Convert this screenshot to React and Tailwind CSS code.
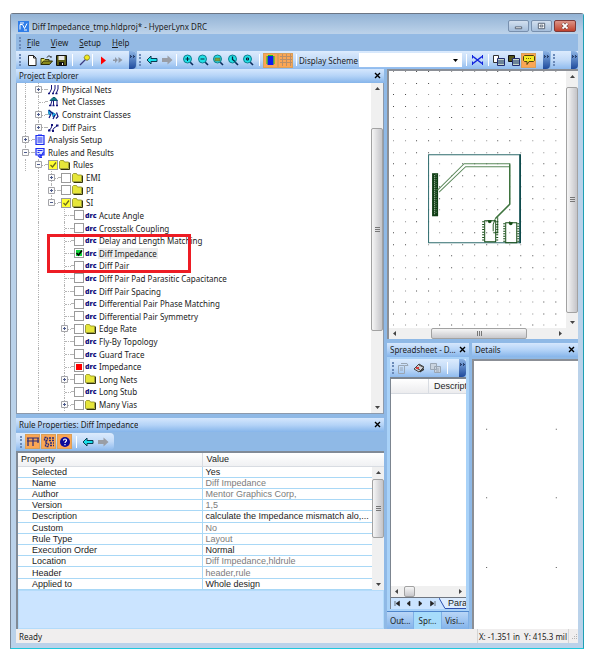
import { useState } from 'react'
import clsx from 'clsx'

const TREE = [
  { level: 1, text: 'Physical Nets', icon: 'nets', box: '+' },
  { level: 1, text: 'Net Classes', icon: 'classes' },
  { level: 1, text: 'Constraint Classes', icon: 'constraint', box: '+' },
  { level: 1, text: 'Diff Pairs', icon: 'pairs', box: '+', last: true },
  { level: 0, text: 'Analysis Setup', icon: 'setup', box: '+' },
  { level: 0, text: 'Rules and Results', icon: 'results', box: '-', last: true },
  { level: 1, text: 'Rules', icon: 'folder', box: '-', check: 'yellow' },
  { level: 2, text: 'EMI', icon: 'folder', box: '+', check: 'none' },
  { level: 2, text: 'PI', icon: 'folder', box: '+', check: 'none' },
  { level: 2, text: 'SI', icon: 'folder', box: '-', check: 'yellow', last: true },
  { level: 3, text: 'Acute Angle', icon: 'drc', check: 'none' },
  { level: 3, text: 'Crosstalk Coupling', icon: 'drc', check: 'none' },
  { level: 3, text: 'Delay and Length Matching', icon: 'drc', check: 'none' },
  { level: 3, text: 'Diff Impedance', icon: 'drc', check: 'green', selected: true },
  { level: 3, text: 'Diff Pair', icon: 'drc', check: 'none' },
  { level: 3, text: 'Diff Pair Pad Parasitic Capacitance', icon: 'drc', check: 'none' },
  { level: 3, text: 'Diff Pair Spacing', icon: 'drc', check: 'none' },
  { level: 3, text: 'Differential Pair Phase Matching', icon: 'drc', check: 'none' },
  { level: 3, text: 'Differential Pair Symmetry', icon: 'drc', check: 'none' },
  { level: 3, text: 'Edge Rate', icon: 'folder', box: '+', check: 'none' },
  { level: 3, text: 'Fly-By Topology', icon: 'drc', check: 'none' },
  { level: 3, text: 'Guard Trace', icon: 'drc', check: 'none' },
  { level: 3, text: 'Impedance', icon: 'drc', check: 'red' },
  { level: 3, text: 'Long Nets', icon: 'folder', box: '+', check: 'none' },
  { level: 3, text: 'Long Stub', icon: 'drc', check: 'none' },
  { level: 3, text: 'Many Vias', icon: 'folder', box: '+', check: 'none' },
]

const PROPS = [
  ['Selected', 'Yes', true],
  ['Name', 'Diff Impedance'],
  ['Author', 'Mentor Graphics Corp,'],
  ['Version', '1,5'],
  ['Description', 'calculate the Impedance mismatch alo,...', true],
  ['Custom', 'No'],
  ['Rule Type', 'Layout'],
  ['Execution Order', 'Normal', true],
  ['Location', 'Diff Impedance,hldrule'],
  ['Header', 'header,rule'],
  ['Applied to', 'Whole design', true],
]

const BAR = 'bg-linear-to-b from-[#dcebfd] via-[#c3dbf8] to-[#8fbbee]'

/* ---------- small pieces ---------- */

function Grip() {
  return <span className="h-3 w-0 shrink-0 border-l-2 border-dotted border-[#6b8ab8]" />
}

function Sep() {
  return <span className="h-3 w-px shrink-0 bg-white" />
}

function Overflow() {
  return (
    <button aria-label="Toolbar options" className="flex h-full w-[7px] shrink-0 justify-center rounded-r-sm bg-linear-to-b from-[#8db4e4] to-[#1e4a9c] pt-1">
      <svg width="5" height="4" viewBox="0 0 5 4" fill="none" stroke="#0a1a40"><path d="M0 .5l1.500 1L0 2.500M3 .5l1.500 1L3 2.500" /></svg>
    </button>
  )
}

function Tool({ label, on, wide, children }) {
  return (
    <button
      aria-label={label}
      className={clsx(
        'flex shrink-0 items-center justify-center',
        on ? 'h-[15px] w-[15px] border border-[#d9a05a] bg-[#fba654]' : 'h-[15px]',
        !on && (wide ? 'w-[15px]' : 'w-[14px]')
      )}
    >
      {children}
    </button>
  )
}

function BackArrow() {
  return <svg width="12" height="10" viewBox="0 0 12 10"><path d="M1 5l4-4v2.500h6v3H5V9z" fill="#17e0ea" stroke="#0b3b50" strokeWidth="1" /></svg>
}

function ForwardArrow() {
  return <svg width="12" height="10" viewBox="0 0 12 10"><path d="M11.500 5l-5-4.500V3H1v4h5.500v2.500z" fill="#9a9ea6" /></svg>
}

function ZoomIcon({ kind }) {
  return (
    <svg width="12" height="12" viewBox="0 0 12 12">
      <path d="M8 8l3 3" stroke="#0b2a5c" strokeWidth="1.600" />
      <circle cx="5.500" cy="5" r="4" fill="#1fe0e4" stroke="#0f7f92" />
      {kind === 'in' && <path d="M3.500 5h4M5.500 3v4" stroke="#04243c" />}
      {kind === 'out' && <path d="M3.500 5h4" stroke="#04243c" />}
      {kind === 'area' && <path d="M3 4h5v3H3z" fill="#7aa63c" stroke="#5a6a4a" strokeWidth=".6" />}
      {kind === 'prev' && <path d="M5.500 2.500v3L8 7.500" stroke="#04243c" strokeWidth="1.300" fill="none" />}
      {kind === 'fit' && <path d="M4.500 4h2v2h-2z" fill="#7ac" stroke="#04243c" />}
    </svg>
  )
}

function CloseX() {
  return (
    <button aria-label="Close panel" className="flex h-3 w-3 items-center justify-center">
      <svg width="7" height="7" viewBox="0 0 7 7"><path d="M1 1l5 5M6 1L1 6" stroke="#000" strokeWidth="1.400" /></svg>
    </button>
  )
}

function PanelHeader({ title }) {
  return (
    <div className="flex h-[14px] shrink-0 items-center justify-between bg-linear-to-b from-[#d5e7fd] via-[#b4d3f7] to-[#86b5ea] pr-px pb-px pl-[3px]">
      <h2 className="truncate">{title}</h2>
      <CloseX />
    </div>
  )
}

function Arrow({ dir }) {
  const d = { up: 'M1 5l2.500-3L6 5z', down: 'M1 2l2.500 3L6 2z', left: 'M5 1L2 3.500 5 6z', right: 'M2 1l3 2.500L2 6z' }[dir]
  return (
    <button aria-label={'Scroll ' + dir} className="flex h-[11px] w-[11px] shrink-0 items-center justify-center">
      <svg width="7" height="7" viewBox="0 0 7 7"><path d={d} fill="#444" /></svg>
    </button>
  )
}

function VScroll({ before, thumb }) {
  return (
    <div className="flex w-[12px] shrink-0 flex-col items-center bg-[#f0f0f0]">
      <Arrow dir="up" />
      <div className="flex w-full flex-1 flex-col">
        <div className={clsx('shrink-0', before)} />
        <div className={clsx('flex shrink-0 items-center justify-center rounded-[2px] border border-[#a2a2a2] bg-linear-to-r from-[#f6f6f6] to-[#c4c4c8]', thumb)}>
          <svg width="5" height="5" viewBox="0 0 5 5"><path d="M0 .5h5M0 2.500h5M0 4.500h5" stroke="#777" /></svg>
        </div>
      </div>
      <Arrow dir="down" />
    </div>
  )
}

function HScroll({ before, thumb, marks }) {
  return (
    <div className="flex h-[11px] shrink-0 items-center bg-[#f0f0f0]">
      <Arrow dir="left" />
      <div className="flex h-full flex-1">
        <div className={clsx('shrink-0', before)} />
        <div className={clsx('flex shrink-0 items-center justify-center rounded-[2px] border border-[#a2a2a2] bg-linear-to-b from-[#f6f6f6] to-[#c8c8cc]', thumb)}>
          {marks && <svg width="5" height="5" viewBox="0 0 5 5"><path d="M.5 0v5M2.500 0v5M4.500 0v5" stroke="#777" /></svg>}
        </div>
      </div>
      <Arrow dir="right" />
    </div>
  )
}

/* ---------- project tree ---------- */

function TreeIcon({ name }) {
  if (name === 'drc') return <span className="w-[11px] shrink-0 text-[7px] leading-none font-black whitespace-nowrap text-[#10107c]">drc</span>
  if (name === 'folder') {
    return (
      <svg className="shrink-0" width="11" height="10" viewBox="0 0 11 10">
        <path d="M1.500 9.500h9v-7" stroke="#33330c" fill="none" />
        <path d="M.5 8.500v-7l1-1h3l1 1.500H9.500v6.500z" fill="#e6e63a" stroke="#8a8a20" strokeWidth=".8" />
      </svg>
    )
  }
  if (name === 'setup') {
    return (
      <svg className="shrink-0" width="10" height="11" viewBox="0 0 10 11">
        <path d="M1 1.500h8v9H1z" fill="#dfe6ff" stroke="#1c2cf0" strokeWidth="1.200" />
        <path d="M3 .5h4v1.500H3z" fill="#1c2cf0" />
        <path d="M2.500 4h5M2.500 6h5M2.500 8h5" stroke="#1c2cf0" />
      </svg>
    )
  }
  if (name === 'results') {
    return (
      <svg className="shrink-0" width="10" height="11" viewBox="0 0 10 11">
        <path d="M1 1.500h8v6.500H1z" fill="#dfe6ff" stroke="#1c2cf0" strokeWidth="1.200" />
        <path d="M2.500 3.500h5M2.500 5.500h2" stroke="#1c2cf0" />
        <path d="M4.500 7L6 9.500 8.500 5M3 8.500l2 2h2" stroke="#1c2cf0" strokeWidth="1.200" fill="none" />
      </svg>
    )
  }
  if (name === 'nets') {
    return (
      <svg className="shrink-0" width="11" height="11" viewBox="0 0 11 11" stroke="#15157c" fill="none">
        <path d="M1 10l2.500-5V1M4.500 10L7 5V1M8 10l2-5V1" />
        <path d="M0 9.500h2M4 9.500h2M7.500 9.500h2" strokeWidth="1.500" />
      </svg>
    )
  }
  if (name === 'classes') {
    return (
      <svg className="shrink-0" width="11" height="11" viewBox="0 0 11 11" stroke="#15157c" fill="none">
        <path d="M2 4.500l3-3h2l2.500 3z" fill="#137c84" stroke="#0f5c74" />
        <path d="M2.500 9.500L4 4.500M5.500 9.500v-5M9 9.500v-5" />
        <path d="M1 9.500h2.500M4.500 9.500h2M8 9.500h2" strokeWidth="1.600" />
      </svg>
    )
  }
  if (name === 'constraint') {
    return (
      <svg className="shrink-0" width="11" height="11" viewBox="0 0 11 11" stroke="#15157c" fill="none">
        <path d="M0 1l4 2.500L1 6zM4 3l4 2.500L5 8z" fill="#1fb7ea" stroke="#1273b8" strokeWidth=".8" />
        <path d="M1 9L3 5M5 10l2-4M8 9.500l2-2-1.500-4M1 1l4 4" strokeWidth="1.200" />
      </svg>
    )
  }
  return (
    <svg className="shrink-0" width="11" height="11" viewBox="0 0 11 11" stroke="#15157c" fill="none">
      <path d="M1 8l2-1.500 1-3M4 9l2-3 3-2" />
      <path d="M0 8.500h2.500M3 3h2M4 9h2M8 3.500h2.500" strokeWidth="2" />
    </svg>
  )
}

function TreeRow({ item }) {
  const [checked, setChecked] = useState(Boolean(item.check) && item.check !== 'none')
  const { level, box, check, last, selected, text, icon } = item
  // column whose guide line runs on past this row
  const guide = { 1: 0, 2: 1, 3: 1 }[level]

  return (
    <li className="flex min-h-[12px] flex-1 items-center">
      {Array.from({ length: level }, (_, i) => (
        <span key={i} className="flex w-[13px] shrink-0 self-stretch pl-1.5">
          {guide === i && <span className="border-l border-dotted border-[#b4b4b4]" />}
        </span>
      ))}
      <span className="relative flex w-[13px] shrink-0 items-center justify-center self-stretch">
        <span className={clsx('absolute top-0 left-1.5 border-l border-dotted border-[#b4b4b4]', last ? 'h-1/2' : 'h-full')} />
        <span className="absolute top-1/2 right-0 w-1.5 border-t border-dotted border-[#b4b4b4]" />
        {box && (
          <svg className="relative" width="7" height="7" viewBox="0 0 7 7">
            <path d="M.5 .5h6v6h-6z" fill="#fbfbfb" stroke="#a4a4a8" />
            <path d={box === '+' ? 'M2 3.500h3M3.500 2v3' : 'M2 3.500h3'} stroke="#4c5a8c" />
          </svg>
        )}
      </span>
      <span className="mr-px w-0.5 shrink-0 border-t border-dotted border-[#b4b4b4]" />
      <label className="flex items-center">
        {check && (
          <span className="relative mr-px flex h-[10px] w-[10px] shrink-0">
            <input
              type="checkbox"
              checked={checked}
              onChange={(e) => setChecked(e.target.checked)}
              className={clsx('h-[10px] w-[10px] appearance-none border border-[#9a9a9a]', check === 'yellow' ? 'bg-[#ffff30]' : 'bg-white')}
            />
            {checked && (
              <svg className="pointer-events-none absolute inset-0" width="10" height="10" viewBox="0 0 10 10">
                {check === 'red' && <path d="M2 2h6v6H2z" fill="#f00" />}
                {check === 'green' && <path d="M2 2h6v6H2z" fill="#12d43a" />}
                {check === 'green' && <path d="M2.500 5l2 2L8 2.500" fill="none" stroke="#000" strokeWidth="1.500" />}
                {check === 'yellow' && <path d="M2.500 5l2 2L8 2.500" fill="none" stroke="#6c6c20" strokeWidth="1.300" />}
              </svg>
            )}
          </span>
        )}
        <TreeIcon name={icon} />
        <span className={clsx('ml-0.5 px-px whitespace-nowrap', selected && 'bg-[#ececec]')}>{text}</span>
      </label>
    </li>
  )
}

function ProjectExplorer() {
  return (
    <section className="flex flex-1 flex-col">
      <PanelHeader title="Project Explorer" />
      <div className="relative flex flex-1 border-x border-b border-[#8d9aab] bg-white">
        <ul className="flex flex-1 flex-col overflow-hidden pb-0.5 pl-0.5">
          {TREE.map((item) => <TreeRow key={item.text} item={item} />)}
        </ul>
        <VScroll before="h-[11%]" thumb="h-[66%]" />
        {/* callout around the rule being discussed */}
        <div className="pointer-events-none absolute top-[151px] left-[30px] h-[39px] w-[144px] border-[3px] border-[#ed1c24]" />
      </div>
    </section>
  )
}

/* ---------- rule properties ---------- */

function RuleProperties() {
  return (
    <section className="mt-1 flex flex-col">
      <PanelHeader title="Rule Properties: Diff Impedance" />
      <div className="flex h-[19px] items-center">
        <div className={clsx('flex h-[17px] items-center gap-px rounded-r-sm px-1', BAR)}>
          <Grip />
          <span className="w-px" />
          <Tool label="Table view" on>
            <svg width="12" height="11" viewBox="0 0 12 11"><path d="M0 2h12M0 5h12M1 2v8M6 2v8M11 2v5" stroke="#2b2b78" strokeWidth="1.200" fill="none" /></svg>
          </Tool>
          <Tool label="Group view" on>
            <svg width="12" height="12" viewBox="0 0 12 12" stroke="#2b2b78" fill="none"><path d="M1.500 1.500h3v3h-3zM2.500 7.500h3v3h-3zM3 5v2M6 2h5M6 4.500h5M7 7h4M7 9.500h4" strokeWidth="1.300" strokeDasharray="2 1" /></svg>
          </Tool>
          <Tool label="Help" on>
            <svg width="12" height="12" viewBox="0 0 12 12"><circle cx="6" cy="6" r="5" fill="#0a0a9c" /><path d="M4.500 4.500c0-2 3-2 3 0 0 1-1.500 1-1.500 2.500M6 8v1.200" stroke="#fff" strokeWidth="1.200" fill="none" /></svg>
          </Tool>
          <span className="w-0.5" />
          <Sep />
          <span className="w-0.5" />
          <Tool label="Back"><BackArrow /></Tool>
          <Tool label="Forward"><ForwardArrow /></Tool>
        </div>
      </div>
      <div className="border-t-2 border-l-2 border-[#808a96] bg-white font-['Liberation_Sans',sans-serif] text-[9px] leading-[10px]">
        <div className="flex">
          <div className="min-w-0 flex-1">
            <table className="h-[137px] w-full table-fixed border-collapse">
              <thead>
                <tr className="h-[13px] bg-linear-to-b from-white to-[#f0f1f3] text-left">
                  <th className="w-[52%] border-r border-b border-[#d8dce2] p-0 pl-[3px] font-normal">Property</th>
                  <th className="border-b border-[#d8dce2] p-0 pl-1 font-normal">Value</th>
                </tr>
              </thead>
              <tbody>
                {PROPS.map(([name, value, editable]) => (
                  <tr key={name} className="border-b border-[#a9d8f6]">
                    <td className="border-r border-[#a9d8f6] p-0 pl-[14px]">{name}</td>
                    <td className={clsx('p-0 pl-[3px] whitespace-nowrap', !editable && 'text-[#7c7c7c]')}>{value}</td>
                  </tr>
                ))}
              </tbody>
            </table>
          </div>
          <div className="flex flex-col">
            <div className="h-[14px] border-b border-[#d8dce2] bg-linear-to-b from-white to-[#f0f1f3]" />
            <div className="flex flex-1"><VScroll before="h-[1%]" thumb="h-[58%]" /></div>
          </div>
        </div>
        <div className="h-[39px] border border-[#b4dbfa] bg-[#cbe4ff]" />
      </div>
    </section>
  )
}

/* ---------- board view ---------- */

function BoardView() {
  const cols = Array.from({ length: 15 }, (_, i) => Math.round(4 + i * 11.57))
  const rows = Array.from({ length: 23 }, (_, i) => Math.round(i * 11.5))
  const pins = [0, 1, 2, 3, 4, 5, 6, 7]
  return (
    <div className="flex flex-1 flex-col border-t-2 border-l-2 border-[#8b8f96] bg-white">
      <div className="flex flex-1">
        <div className="relative flex-1 overflow-hidden">
          <svg className="absolute inset-0 h-full w-full" viewBox="0 0 177 257" preserveAspectRatio="xMinYMin slice">
            {rows.map((y) => cols.map((x) => <path key={x + '-' + y} d={`M${x} ${y}h1v1h-1z`} fill={(x + y) % 3 ? '#8e8e8e' : '#4a4a4a'} />))}
            <path d="M39.500 83.500h91v88h-91z" fill="none" stroke="#2f6c6e" />
            <path d="M131 83v89" stroke="#0e4a4c" strokeWidth="1.500" />
            {/* edge connector */}
            <path d="M43 102h6v43h-6z" fill="#0f3d14" />
            <path d="M45.500 104v40" stroke="#c7d6c4" strokeDasharray="1 1" />
            <path d="M47 103v40" stroke="#7a9a78" strokeDasharray="1 1.500" />
            {/* differential traces */}
            <g fill="none" stroke="#5c8a5c">
              <path d="M48.500 119L75 92.500h45.500V133L107 146.500" />
              <path d="M50 121L76.500 95.500H120" />
              <path d="M120.500 93v40L106 147.500" stroke="#3f743f" strokeWidth="1.400" />
              <path d="M108.500 146v15.500H104M106 148l-2 5v7" stroke="#2d612d" />
            </g>
            <g fill="none" stroke="#174d17">
              <path d="M95.500 149.500h11v21h-11zM116.500 151.500h11v20h-11z" />
              <path d="M99 149.500c0 2.500 3 2.500 3 0zM120 151.500c0 2.500 3 2.500 3 0z" fill="#174d17" />
              {pins.map((n) => <path key={n} d={`M93 ${150.500 + n * 2.600}h2M107 ${150.500 + n * 2.600}h2M114 ${152.500 + n * 2.500}h2M128 ${152.500 + n * 2.500}h2`} />)}
            </g>
          </svg>
        </div>
        <VScroll before="h-[2%]" thumb="h-[96%]" />
      </div>
      <div className="flex bg-[#f0f0f0]">
        <div className="flex-1"><HScroll before="w-[20%]" thumb="w-[62%]" marks /></div>
        <div className="w-[12px]" />
      </div>
    </div>
  )
}

/* ---------- spreadsheet + details ---------- */

function Spreadsheet() {
  const [tab, setTab] = useState('Spr...')
  return (
    <section className="flex min-w-0 flex-col">
      <PanelHeader title="Spreadsheet - D..." />
      <div className="flex flex-1 flex-col bg-[#a9d2f8] px-[3px] pt-0.5 pb-0.5">
        <div className={clsx('flex h-[18px] items-center gap-[2px] pl-0.5', BAR)}>
          <Grip />
          <Tool label="Properties">
            <svg width="12" height="12" viewBox="0 0 12 12" fill="none" stroke="#9aa6b4"><path d="M1.500 3.500h6v8h-6zM3 6h3M3 8h3M4 1.500h6l1 2H8" /></svg>
          </Tool>
          <Tool label="Print">
            <svg width="12" height="12" viewBox="0 0 12 12"><path d="M1 7l5-5 5 3-5 5z" fill="#d0d2d6" stroke="#444" /><path d="M3 6l4 2M6 3l4 2" stroke="#444" /><path d="M3 5h3v2H3z" fill="#d43c3c" /><path d="M7 9l4-3v2L7 10.500z" fill="#333" /></svg>
          </Tool>
          <Tool label="Copy">
            <svg width="12" height="12" viewBox="0 0 12 12" fill="#c9d3df" stroke="#9aa6b4"><path d="M1.500 1.500h6v6h-6zM5.500 4.500h6v6h-6zM7 7h3M7 9h3" /></svg>
          </Tool>
          <span className="w-px" />
          <Sep />
          <span className="ml-auto h-full"><Overflow /></span>
        </div>
        <div className="flex flex-1 flex-col border-t-2 border-l border-[#7c8590] bg-white">
          <table className="w-full table-fixed font-['Liberation_Sans',sans-serif] text-[9px] leading-3">
            <thead>
              <tr className="h-[14px] bg-linear-to-b from-white to-[#ececee] text-left">
                <th className="w-1/2 border-r border-b border-[#d8dce2] p-0" aria-label="Row" />
                <th className="overflow-hidden border-b border-[#d8dce2] p-0 pl-[5px] font-normal">Descript</th>
              </tr>
            </thead>
          </table>
          <div className="flex-1" />
          <HScroll before="w-[3%]" thumb="w-[11px]" />
          <div className="flex h-[12px] items-center border-t border-[#6f7680] bg-[#cbe4ff]">
            {['M2 1v5M6.500 1L3 3.500 6.500 6z', 'M5 1L2 3.500 5 6z', 'M2 1l3 2.500L2 6z', 'M6 1v5M1.500 1L5 3.500 1.500 6z'].map((d, i) => (
              <button key={i} aria-label={['First', 'Previous', 'Next', 'Last'][i] + ' sheet'} className="flex w-3 shrink-0 justify-center">
                <svg width="8" height="7" viewBox="0 0 8 7"><path d={d} fill="#222" stroke="#222" strokeWidth=".6" /></svg>
              </button>
            ))}
            <svg className="shrink-0" width="7" height="11" viewBox="0 0 7 11"><path d="M0 0l6 10.500h1V0z" fill="#dcecff" /><path d="M0 0l6 10.500h1" stroke="#2c4fae" fill="none" /></svg>
            <button className="h-full flex-1 overflow-hidden border-b border-[#2c4fae] bg-[#dcecff] pl-0.5 text-left font-['Liberation_Sans',sans-serif] text-[9px] leading-[10px]">Para</button>
          </div>
        </div>
      </div>
      <div className="flex h-[18px] shrink-0 border-t border-[#4f86cc]">
        {['Out...', 'Spr...', 'Visi...'].map((t) => (
          <button
            key={t}
            onClick={() => setTab(t)}
            className={clsx('flex-1 truncate border-r border-[#7fb0e6]', t === tab ? 'bg-[#a6dcfb]' : 'bg-linear-to-b from-[#b9d6f7] to-[#83b3ea]')}
          >
            {t}
          </button>
        ))}
      </div>
    </section>
  )
}

function Details() {
  return (
    <section className="flex min-w-0 flex-col">
      <PanelHeader title="Details" />
      <div className="relative mt-0.5 flex-1 border-t-2 border-l-2 border-[#8b8f96] bg-white">
        <svg className="absolute inset-0 h-full w-full" viewBox="0 0 103 267" preserveAspectRatio="xMinYMin slice">
          {[67, 135, 204].map((y) => <path key={y} d={`M12 ${y}h1v1h-1zM81 ${y}h1v1h-1z`} fill="#555" />)}
        </svg>
      </div>
    </section>
  )
}

/* ---------- window chrome ---------- */

function TitleBar() {
  return (
    <header className="flex h-[20px] items-center bg-linear-to-b from-[#93b3d5] to-[#bdd3ea] pt-1 pr-[7px] pl-[7px]">
      <svg width="11" height="11" viewBox="0 0 11 11"><path d="M0 0h11v11H0z" fill="#2f7de8" /><path d="M2 8.500V3.500h2.500l2 4 2.500-5M2 2h4M6 9h3" stroke="#fff" fill="none" /></svg>
      <h1 className="ml-[3px] flex-1 truncate">Diff Impedance_tmp.hldproj* - HyperLynx DRC</h1>
      <div className="flex h-[12px] gap-0.5">
        {[['Minimize', 'M7 6.500h7v2H7z'], ['Maximize', 'M7 2.500h7v6H7zM9 4.500h3v2H9z']].map(([label, d]) => (
          <button key={label} aria-label={label} className="rounded-[2px] border border-[#7890ae] bg-linear-to-b from-[#d3e0ef] to-[#a5bedb]">
            <svg width="19" height="10" viewBox="0 0 21 11"><path d={d} fill="#fff" stroke="#4e5a6c" /></svg>
          </button>
        ))}
        <button aria-label="Close" className="rounded-[2px] border border-[#7c3a3a] bg-linear-to-b from-[#dc9488] to-[#c0402c]">
          <svg width="20" height="10" viewBox="0 0 20 10"><path d="M7.500 2.500l5 5M12.500 2.500l-5 5" stroke="#5a3030" strokeWidth="3" /><path d="M7.500 2.500l5 5M12.500 2.500l-5 5" stroke="#fff" strokeWidth="1.800" /></svg>
        </button>
      </div>
    </header>
  )
}

function MenuBar() {
  return (
    <nav className="flex h-[17px] items-center gap-[6px] bg-[#94bae4] pl-[3px]">
      <Grip />
      <div className="flex gap-[11px]">
        {['File', 'View', 'Setup', 'Help'].map((m) => (
          <button key={m}><span className="underline">{m[0]}</span>{m.slice(1)}</button>
        ))}
      </div>
    </nav>
  )
}

function Toolbar() {
  return (
    <div className="flex h-[18px] gap-px bg-[#94bae4]">
      <div className={clsx('flex items-center rounded-r-sm pl-[3px]', BAR)}>
        <Grip />
        <span className="w-[3px]" />
        <Tool label="New" wide>
          <svg width="10" height="11" viewBox="0 0 10 11"><path d="M1.500 .5h5l2.500 2.500v7.500H1.500z" fill="#fff" stroke="#222" /><path d="M6.500 .5V3H9" stroke="#222" fill="none" /></svg>
        </Tool>
        <Tool label="Open" wide>
          <svg width="13" height="11" viewBox="0 0 13 11"><path d="M1 9.500v-6h3l1 1h4v2" fill="#e8e860" stroke="#3c3c0c" /><path d="M1 9.500L3.500 6h9L9.500 9.500z" fill="#8a8a1c" stroke="#2c2c08" /><path d="M7 2.500C8 .5 10 .5 11 2.500V1" stroke="#222" fill="none" /></svg>
        </Tool>
        <Tool label="Save" wide>
          <svg width="11" height="11" viewBox="0 0 11 11"><path d="M.5 .5h10v10H.5z" fill="#5c5c14" stroke="#111" /><path d="M2.500 1h6v4h-6z" fill="#e8e8e8" /><path d="M3 7h5v3.500H3z" fill="#111" /><path d="M6 8h1v2H6z" fill="#eee" /></svg>
        </Tool>
        <span className="w-[3px]" />
        <Sep />
        <span className="w-1" />
        <Tool label="Probe" wide>
          <svg width="12" height="12" viewBox="0 0 12 12"><path d="M1 11l5.500-5.500" stroke="#3a3a80" strokeWidth="1.300" /><path d="M5 3.500L8.500 7" stroke="#777" /><circle cx="8" cy="3.500" r="2.600" fill="#f2ea20" stroke="#77771c" strokeWidth=".7" /></svg>
        </Tool>
        <Sep />
        <span className="w-0.5" />
        <Tool label="Run" wide>
          <svg width="6" height="9" viewBox="0 0 6 9"><path d="M1 .5l5 4-5 4z" fill="#f00" /></svg>
        </Tool>
        <Tool label="Run all" wide>
          <svg width="10" height="8" viewBox="0 0 10 8"><path d="M0 3.500h2V1l3 3-3 3V5H0zM5.500 1l4 3-4 3z" fill="#8f98a6" /></svg>
        </Tool>
        <span className="w-1" />
        <Overflow />
      </div>
      <div className={clsx('flex flex-1 items-center rounded-r-sm pl-0.5', BAR)}>
        <Grip />
        <span className="w-[3px]" />
        <Tool label="Back" wide><BackArrow /></Tool>
        <Tool label="Forward" wide><ForwardArrow /></Tool>
        <span className="w-0.5" />
        <Sep />
        <span className="w-[3px]" />
        {['in', 'out', 'area', 'prev', 'fit'].map((k) => (
          <Tool key={k} label={'Zoom ' + k} wide><ZoomIcon kind={k} /></Tool>
        ))}
        <span className="w-1" />
        <Sep />
        <span className="w-[3px]" />
        <Tool label="Components" on>
          <svg width="11" height="12" viewBox="0 0 11 12"><path d="M2.500 2h6v9h-6z" fill="#0a1cf0" /><path d="M1 3h2M1 5h2M1 7h2M1 9h2M8 3h2M8 5h2M8 7h2M8 9h2M3 1.500h5" stroke="#13d013" /></svg>
        </Tool>
        <Tool label="Grid" on>
          <svg width="12" height="12" viewBox="0 0 12 12" stroke="#b98f68" fill="none"><path d="M0 2.500h12M0 5.500h12M0 8.500h12M2.500 0v12M6.500 0v12M10.500 0v12" /></svg>
        </Tool>
        <span className="w-[3px]" />
        <Sep />
        <label htmlFor="scheme" className="ml-0.5 whitespace-nowrap">Display Scheme</label>
        <div className="relative ml-px flex h-[14px] flex-1">
          <select id="scheme" className="h-full w-full appearance-none bg-white" defaultValue="">
            <option value=""></option>
          </select>
          <svg className="pointer-events-none absolute top-1.5 right-1" width="5" height="3" viewBox="0 0 5 3"><path d="M0 0h5L2.500 3z" fill="#000" /></svg>
        </div>
        <span className="w-1" />
        <Sep />
        <span className="w-[3px]" />
        <Tool label="Cross probe" wide>
          <svg width="11" height="10" viewBox="0 0 11 10" stroke="#1022dd" fill="none"><path d="M1 1.500l9 7M1 8.500l9-7" strokeWidth="1.500" /><path d="M.5 0v3.500M10.500 0v3.500M.5 6.500V10M10.500 6.500V10" /></svg>
        </Tool>
        <span className="w-[3px]" />
        <Sep />
        <span className="w-0.5" />
        <Tool label="Copy view" wide>
          <svg width="12" height="11" viewBox="0 0 12 11"><path d="M.5 .5h5v7h-5z" fill="#fff" stroke="#333" /><path d="M4.500 3.500h7v7h-7z" fill="#c6d6c6" stroke="#222c70" /><path d="M6 5v4M8 5v4M10 5v4" stroke="#12306c" /></svg>
        </Tool>
        <Tool label="Save view" wide>
          <svg width="12" height="11" viewBox="0 0 12 11"><path d="M.5 .5h6v6h-6z" fill="#55551c" stroke="#111" /><path d="M4.500 3.500h7v7h-7z" fill="#c6d6c6" stroke="#222c70" /><path d="M6 5v4M8 5v4M10 5v4" stroke="#12306c" /></svg>
        </Tool>
        <Tool label="Comments" on>
          <svg width="12" height="10" viewBox="0 0 12 10"><path d="M1.500 .5h9l1 1v4l-1 1H6l-2 3v-3H1.500l-1-1v-4z" fill="#f5ea24" stroke="#4a4210" /><path d="M3 3.500h6" stroke="#6b6218" strokeDasharray="1 1" /></svg>
        </Tool>
        <span className="w-[7px]" />
        <Overflow />
      </div>
      <div className={clsx('flex w-[27px] items-center justify-between pl-0.5', BAR)}>
        <Grip />
        <Overflow />
      </div>
    </div>
  )
}

export default function App() {
  return (
    <div className="flex min-h-screen flex-col bg-white pt-[13px] pr-[16px] pb-[11px] pl-[10px] font-['Noto_Sans',sans-serif] text-[8px] leading-[11px] text-[#1c1c1c]">
      <div className="flex flex-1 flex-col rounded-t-[3px] border border-t-[#6c7684] border-r-[#1f9fb4] border-b-[#1fc8dc] border-l-[#7b8796] bg-[#bad2ea] px-[5px] pb-[5px]">
        <div className="-mx-[5px]"><TitleBar /></div>
        <MenuBar />
        <Toolbar />
        <main className="grid flex-1 grid-cols-[368fr_191fr] gap-[3px] bg-[#8fb9e6]">
          <div className="flex min-w-0 flex-col">
            <ProjectExplorer />
            <RuleProperties />
          </div>
          <div className="flex min-w-0 flex-col gap-1">
            <div className="flex flex-[270]"><BoardView /></div>
            <div className="grid min-h-0 flex-[285] grid-cols-[82fr_106fr] gap-[3px]">
              <Spreadsheet />
              <Details />
            </div>
          </div>
        </main>
        <footer className="flex h-[14px] items-center bg-[#f0eeee] pl-[3px]">
          <span className="flex-1">Ready</span>
          <span className="flex h-full items-center border-x border-[#d4d4d4] px-px whitespace-pre">X: -1.351 in  Y: 415.3 mil</span>
          <svg className="ml-0.5" width="7" height="7" viewBox="0 0 7 7"><path d="M5 1h1v1H5zM3 3h1v1H3zM5 3h1v1H5zM1 5h1v1H1zM3 5h1v1H3zM5 5h1v1H5z" fill="#b4b4b4" /></svg>
        </footer>
      </div>
    </div>
  )
}
